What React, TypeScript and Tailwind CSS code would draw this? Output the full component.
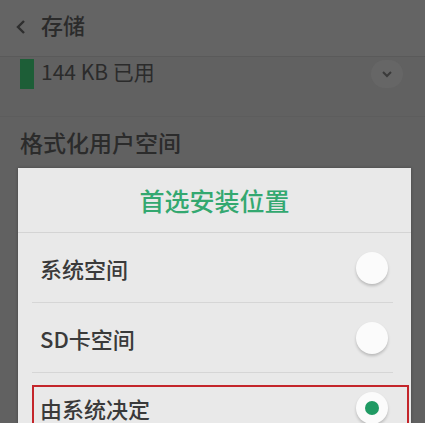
import React from "react";

const font = { fontFamily: '"Noto Sans CJK SC", "Noto Sans", sans-serif' };

const Radio: React.FC<{ checked?: boolean }> = ({ checked }) => (
  <div className="w-[32px] h-[32px] rounded-full bg-[#fbfbfb] shadow-[0_2px_3px_rgba(0,0,0,0.2)] flex items-center justify-center">
    {checked && <div className="w-[14px] h-[14px] rounded-full bg-[#1f9a63]" />}
  </div>
);

const Option: React.FC<{ label: string; checked?: boolean; last?: boolean }> = ({
  label,
  checked,
  last,
}) => (
  <div className="relative h-[70px] flex items-center justify-between pl-[22px] pr-[23px]">
    <span className="text-[22px] font-medium text-[#3a3a3a] leading-none">{label}</span>
    <Radio checked={checked} />
    {!last && (
      <div className="absolute bottom-0 left-[14px] right-[18px] h-px bg-[#d6d6d6]" />
    )}
  </div>
);

export default function App() {
  return (
    <div className="relative w-[425px] h-[423px] overflow-hidden bg-[#616161]" style={font}>
      <div className="h-[57px] flex items-start gap-[14px] pl-[15px] pt-[13px] bg-[#646464] border-b border-[#5a5a5a]">
        <svg width="12" height="18" viewBox="0 0 12 18" className="mt-[5px]">
          <path d="M9 3 L3 9 L9 15" stroke="#2e2e2e" strokeWidth="2.4" fill="none" />
        </svg>
        <span className="text-[22px] font-medium text-[#2b2b2b] leading-none">存储</span>
      </div>
      <div className="h-[60px] flex items-start pl-[20px] pr-[22px] pt-[2px] border-b border-[#5d5d5d]">
        <div className="w-[14px] h-[30px] bg-[#1d5e37]" />
        <span className="ml-[7px] mt-[2px] text-[21px] text-[#2b2b2b] leading-none">144 KB 已用</span>
        <div className="ml-auto mt-[1px] w-[32px] h-[28px] rounded-full bg-[#666666] flex items-center justify-center">
          <svg width="12" height="8" viewBox="0 0 12 8">
            <path d="M2 2 L6 6 L10 2" stroke="#3a3a3a" strokeWidth="2" fill="none" />
          </svg>
        </div>
      </div>
      <div className="pl-[20px] pt-[14px]">
        <span className="text-[23px] font-medium text-[#2b2b2b] leading-none">格式化用户空间</span>
      </div>

      <div className="absolute left-[18px] top-[168px] w-[393px] h-[280px] bg-[#e9e9e9] shadow-[0_0_3px_rgba(0,0,0,0.3)]">
        <div className="h-[65px] flex items-center justify-center border-b border-[#d4d4d4]">
          <span className="text-[25px] font-medium text-[#33a870] leading-none">首选安装位置</span>
        </div>
        <Option label="系统空间" />
        <Option label="SD卡空间" />
        <Option label="由系统决定" checked last />
        <div className="absolute left-[14px] top-[217px] w-[377px] h-[70px] border-2 border-[#c4262b]" />
      </div>
    </div>
  );
}
